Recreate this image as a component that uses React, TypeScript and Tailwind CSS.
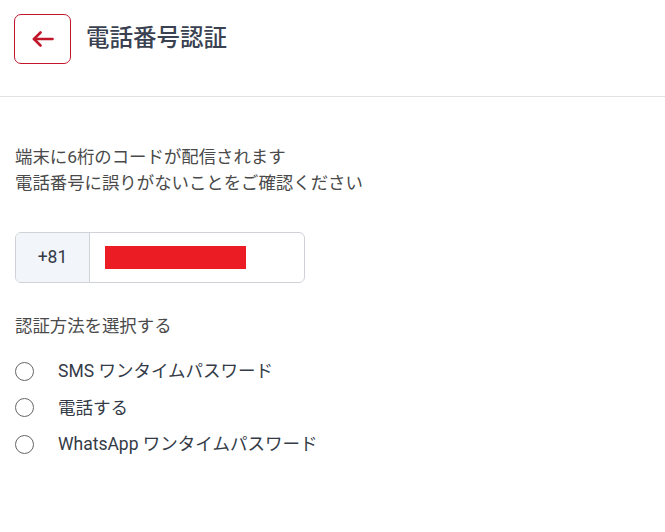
const font = "font-['Roboto','Noto_Sans_CJK_JP',sans-serif]";

const methods = ["SMS ワンタイムパスワード", "電話する", "WhatsApp ワンタイムパスワード"];

const App = () => {
  return (
    <div className={`min-h-screen w-full bg-white ${font}`}>
      {/* Header */}
      <div className="flex items-center gap-[15px] border-b border-[#e2e2e2] pl-[14px] pt-[14px] pb-[32px]">
        <button className="flex h-[50px] w-[57px] items-center justify-center rounded-[7px] border border-[#c0172a]">
          <svg width="22" height="16" viewBox="0 0 22 16" fill="none" stroke="#c0172a" strokeWidth="2.6" strokeLinecap="round" strokeLinejoin="round">
            <path d="M20.5 8H2" />
            <path d="M8.5 1.5 2 8l6.5 6.5" />
          </svg>
        </button>
        <h1 className="text-[23.5px] font-medium leading-none text-[#3a4150]">電話番号認証</h1>
      </div>

      {/* Body */}
      <div className="px-[15px] pt-[47px]">
        <p className="text-[17.4px] leading-[26px] text-[#4a4a4a]">
          端末に6桁のコードが配信されます
          <br />
          電話番号に誤りがないことをご確認ください
        </p>

        <div className="mt-[36px] flex h-[51px] w-[290px] overflow-hidden rounded-[6px] border border-[#cfd2d6]">
          <div className="flex w-[74px] items-center justify-center border-r border-[#cfd2d6] bg-[#f2f5f9] text-[17.5px] text-[#333a45]">
            +81
          </div>
          <div className="flex flex-1 items-center pl-[15px]">
            <div className="h-[23px] w-[141px] bg-[#ec1c24]" />
          </div>
        </div>

        <p className="mt-[30px] text-[17.4px] leading-[26px] text-[#4a4a4a]">認証方法を選択する</p>

        <div className="mt-[19px] flex flex-col gap-[10.5px]">
          {methods.map((m) => (
            <label key={m} className="flex items-center gap-[24px]">
              <span className="h-[19px] w-[19px] rounded-full border border-[#666]" />
              <span className="text-[17.5px] leading-[26px] text-[#343b47]">{m}</span>
            </label>
          ))}
        </div>
      </div>
    </div>
  );
};

export default App;
